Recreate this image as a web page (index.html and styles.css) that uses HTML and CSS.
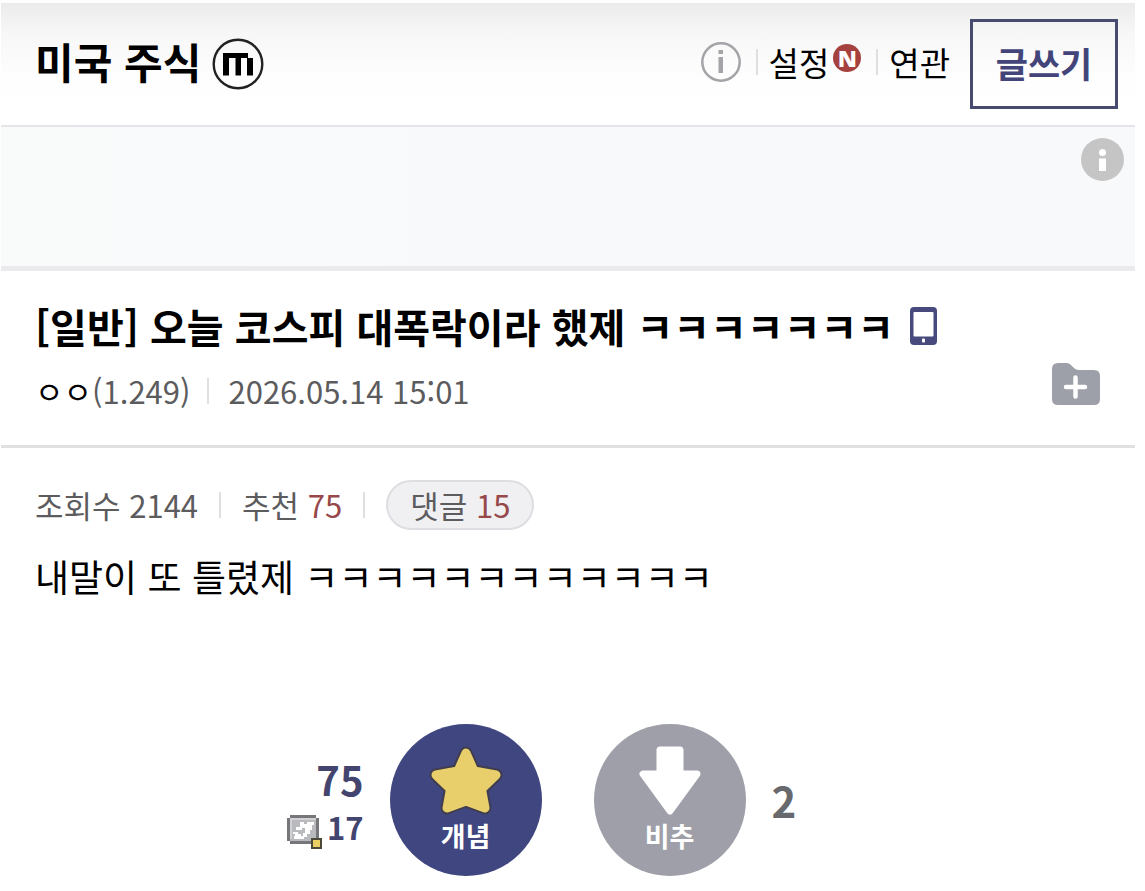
FILE: index.html
```html
<!DOCTYPE html>
<html lang="ko">
<head>
    <meta charset="UTF-8">
    <meta name="viewport" content="width=device-width, initial-scale=1.0">
    <title>미국 주식</title>
    <link rel="stylesheet" href="styles.css">
</head>
<body>
<header class="header">
    <h1 class="gallery-name">
        <a href="#">미국 주식</a>
        <svg class="mark" viewBox="0 0 52 52" aria-hidden="true">
            <circle cx="26" cy="26" r="24.3" fill="none" stroke="#222" stroke-width="2.4"/>
            <path d="M11 15H36V20H41V37.500H35V20H29V37.500H23.500V20H17V37.500H11Z" fill="#000"/>
        </svg>
    </h1>
    <nav class="menu">
        <button class="icon-btn" type="button" aria-label="정보">
            <svg class="info" viewBox="0 0 40 40" aria-hidden="true">
                <circle cx="20" cy="20" r="18.7" fill="none" stroke="#a2a4a8" stroke-width="2.5"/>
                <path d="M17.500 8H22V12H17.500ZM17.500 15H22V31H17.500Z" fill="#a2a4a8"/>
            </svg>
        </button>
        <a class="menu-link" href="#">설정<span class="new">N</span></a>
        <a class="menu-link" href="#">연관</a>
    </nav>
    <button class="write-btn" type="button">글쓰기</button>
</header>

<!-- 광고 영역 -->
<aside class="ad">
    <button class="icon-btn" type="button" aria-label="광고 정보">
        <svg class="ad-info" viewBox="0 0 43 43" aria-hidden="true">
            <circle cx="21.5" cy="21.5" r="21.5" fill="#c5c5c5"/>
            <circle cx="21.5" cy="14.5" r="3.5" fill="#fff"/>
            <path d="M18 20.500H25V33H18Z" fill="#fff"/>
        </svg>
    </button>
</aside>

<main>
    <section class="post-head">
        <h2 class="post-title">
            [일반] 오늘 코스피 대폭락이라 했제 ㅋㅋㅋㅋㅋㅋㅋ
            <svg class="phone" viewBox="0 0 27 38" aria-hidden="true">
                <rect width="27" height="38" rx="4" fill="#484a7d"/>
                <rect x="3.5" y="5" width="20" height="24.5" rx="1" fill="#fff"/>
                <rect x="12" y="31.5" width="3" height="4" rx="1" fill="#fff"/>
            </svg>
        </h2>
        <div class="post-meta">
            <span><span class="nick">ㅇㅇ</span>(1.249)</span>
            <time class="date">2026.05.14 15:01</time>
            <button class="icon-btn scrap" type="button" aria-label="스크랩">
                <svg class="folder" viewBox="0 0 48 42" aria-hidden="true">
                    <path d="M6 0H14C20 0 21 7 27 7H42Q48 7 48 13V36Q48 42 42 42H6Q0 42 0 36V6Q0 0 6 0Z" fill="#9d9fa9"/>
                    <path d="M14 24H33M23.500 14.500V33.500" stroke="#fff" stroke-width="4.5" stroke-linecap="round"/>
                </svg>
            </button>
        </div>
    </section>

    <section class="post-body">
        <div class="stats">
            <span>조회수 2144</span>
            <span class="stat">추천 <span class="red">75</span></span>
            <span class="stat"><a class="reply" href="#">댓글 <span class="red">15</span></a></span>
        </div>
        <p class="text">내말이 또 틀렸제 ㅋㅋㅋㅋㅋㅋㅋㅋㅋㅋㅋㅋ</p>

        <div class="vote">
            <div class="up-count">
                <strong class="up-total">75</strong>
                <span class="up-fixed">
                    <!-- 고정닉 추천 수 -->
                    <svg class="badge" viewBox="0 0 35 34" aria-hidden="true" shape-rendering="crispEdges">
                        <path d="M3 0H29V3H32V26H29V29H3V26H0V3H3Z" fill="#77777b"/>
                        <path d="M3 3H29V26H3Z" fill="#b9babd"/>
                        <path d="M3 3H29V5H5V24H3Z" fill="#d2d2d4"/>
                        <path d="M13 7H17V9H20V7H27V10H25V15H23V19H20V22H17V24H7V21H16V18H18V13H15V15H9V12H13Z" fill="#fff"/>
                        <path d="M6 17H11V19H14V21H8V19H6Z" fill="#fff"/>
                    	<path d="M24 23H35V34H24Z" fill="#4d4939"/>
                        <path d="M26 25H33V32H26Z" fill="#ebcf62"/>
                    </svg>
                    <strong>17</strong>
                </span>
            </div>
            <button class="vote-btn up" type="button">
                <svg class="star" viewBox="0 0 74 70" aria-hidden="true">
                    <path id="star-shape" d="M37 7L45 25L67 29L52.500 43L56 62L37 55L18 62L21.500 43L7 29L29 25Z" fill="#403d4f" stroke="#403d4f" stroke-width="13" stroke-linejoin="round"/>
                    <path d="M37 7L45 25L67 29L52.500 43L56 62L37 55L18 62L21.500 43L7 29L29 25Z" fill="#e8cf6b" stroke="#e8cf6b" stroke-width="9" stroke-linejoin="round"/>
                </svg>
                개념
            </button>
            <button class="vote-btn down" type="button">
                <svg class="arrow" viewBox="0 0 74 70" aria-hidden="true">
                    <path d="M27 4H47V28H64L37 65L10 28H27Z" fill="#fff" stroke="#fff" stroke-width="7" stroke-linejoin="round"/>
                </svg>
                비추
            </button>
            <strong class="down-count">2</strong>
        </div>
    </section>
</main>
</body>
</html>
```
FILE: styles.css
```css
* {
    box-sizing: border-box;
}

body {
    margin: 3px 10px 0 1px;
    background: #fff;
    color: #000;
    font-family: "Noto Sans CJK KR", sans-serif;
    font-size: 31px;
}

h1, h2, p {
    margin: 0;
}

a {
    color: inherit;
    text-decoration: none;
}

svg {
    display: block;
    flex: none;
    overflow: visible;
}

button {
    font-family: inherit;
    cursor: pointer;
}

.icon-btn {
    padding: 0;
    border: 0;
    background: none;
}

/* 상단 */
.header {
    display: flex;
    align-items: center;
    padding: 16px 17px 16px 34px;
    border-bottom: 2px solid #e5e5e9;
    background: linear-gradient(#ebebeb, #f7f7f7 30px, #fefefe 75px, #fff);
}

.gallery-name {
    display: flex;
    align-items: center;
    gap: 11px;
    font-size: 42px;
    line-height: 60px;
}

.gallery-name a {
    padding-bottom: 6px;
}

.mark {
    width: 52px;
    height: 52px;
}

.menu {
    display: flex;
    align-items: center;
    margin-left: auto;
    padding-bottom: 5px;
}

.info {
    width: 40px;
    height: 40px;
}

.menu-link {
    display: flex;
    align-items: center;
    margin-left: 15px;
    font-size: 33px;
    line-height: 48px;
}

.menu-link::before,
.date::before,
.stat::before {
    content: "";
    width: 2px;
    height: 26px;
    background: #dfdfe2;
}

.menu-link::before {
    margin-right: 11px;
}

.new {
    width: 28px;
    height: 28px;
    margin: 0 0 8px 4px;
    border-radius: 50%;
    background: #a5423f;
    color: #fff;
    font-family: "Open Sans", sans-serif;
    font-size: 23px;
    font-weight: 800;
    line-height: 28px;
    text-align: center;
}

.write-btn {
    min-width: 148px;
    height: 90px;
    margin-left: 20px;
    padding: 0 0 4px;
    border: 3px solid #484a70;
    background: transparent;
    color: #43457a;
    font-size: 35px;
    font-weight: bold;
}

/* 광고 */
.ad {
    display: flex;
    justify-content: flex-end;
    align-items: flex-start;
    min-height: 144px;
    padding: 11px;
    border-bottom: 5px solid #ebebed;
    background: linear-gradient(to right, #f9fbfb, #f8f9fb 40%);
}

.ad-info {
    width: 43px;
    height: 43px;
}

/* 글 제목 */
.post-head {
    padding: 27px 35px 26px 34px;
    border-bottom: 3px solid #e0e0e2;
}

.post-title {
    display: flex;
    align-items: center;
    gap: 16px;
    font-size: 40px;
    line-height: 56px;
}

.phone {
    width: 27px;
    height: 38px;
}

.post-meta {
    display: flex;
    align-items: center;
    min-height: 56px;
    margin-top: 9px;
    color: #5c5c5e;
    line-height: 46px;
}

.nick {
    color: #000;
}

.date,
.stat {
    display: flex;
    align-items: center;
    white-space: pre;
}

.date::before {
    margin: 0 19px 0 17px;
}

.stat::before {
    margin: 0 21px;
}

.scrap {
    align-self: flex-start;
    margin-left: auto;
}

.folder {
    width: 48px;
    height: 42px;
}

/* 본문 */
.post-body {
    padding: 32px 35px 15px 34px;
}

.stats {
    display: flex;
    align-items: center;
    color: #5c5c5e;
    line-height: 46px;
}

.red {
    color: #96484a;
}

.reply {
    padding: 0 22px;
    border: 2px solid #dedee2;
    border-radius: 25px;
    background: #f0f0f2;
}

.text {
    margin-top: 18px;
    font-size: 37px;
    line-height: 56px;
}

/* 추천 / 비추천 */
.vote {
    display: grid;
    grid-template-columns: 1fr auto auto 1fr;
    align-items: center;
    margin-top: 120px;
}

.up-count {
    display: flex;
    flex-direction: column;
    align-items: flex-end;
    padding: 4px 26px 0 0;
    color: #43456f;
}

.up-total {
    font-size: 40px;
    line-height: 50px;
}

.up-fixed {
    display: flex;
    align-items: center;
    gap: 5px;
    font-size: 31px;
    line-height: 46px;
}

.badge {
    width: 35px;
    height: 34px;
    margin-top: 10px;
}

.vote-btn {
    display: flex;
    flex-direction: column;
    align-items: center;
    width: 152px;
    height: 152px;
    margin: 0 26px;
    padding: 22px 0 0;
    border: 0;
    border-radius: 50%;
    color: #fff;
    font-size: 27px;
    font-weight: bold;
    line-height: 40px;
}

.up {
    margin-left: 0;
    background: #40467f;
}

.down {
    margin-right: 0;
    background: #9e9fa8;
}

.star,
.arrow {
    width: 74px;
    height: 70px;
}

.down-count {
    padding-left: 26px;
    color: #68696c;
    font-size: 42px;
    line-height: 50px;
}
```
